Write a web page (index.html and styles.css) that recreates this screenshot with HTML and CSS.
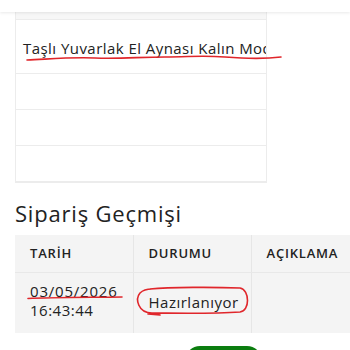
FILE: index.html
```html
<!DOCTYPE html>
<html lang="tr">
<head>
<meta charset="utf-8">
<link rel="stylesheet" href="styles.css">
</head>
<body>
<div class="page">
  <div class="topbar"></div>
  <div class="products">
    <div class="prow prow-head"></div>
    <div class="prow prow-name"><span class="pname">Taşlı Yuvarlak El Aynası Kalın Model</span></div>
    <div class="prow prow-empty"></div>
    <div class="prow prow-empty"></div>
    <div class="prow prow-empty"></div>
  </div>
  <h2 class="title">Sipariş Geçmişi</h2>
  <div class="history-wrap">
    <table class="history">
      <thead>
        <tr><th>TARİH</th><th>DURUMU</th><th>AÇIKLAMA</th></tr>
      </thead>
      <tbody>
        <tr>
          <td class="date"><span class="d">03/05/2026</span><span class="t">16:43:44</span></td>
          <td class="status">Hazırlanıyor</td>
          <td></td>
        </tr>
      </tbody>
    </table>
  </div>
  <div class="actions"><button class="btn-green" type="button" aria-label="Onayla"></button></div>
  <svg class="marks" width="350" height="350" viewBox="0 0 350 350">
    <path d="M27 60 C 50 59, 70 57, 95 58 S 140 57, 165 57 S 200 55, 225 57 S 265 59, 281 57" />
    <path d="M28 298.5 C 50 297.5, 80 297.5, 122 297" />
    <path d="M150 289 C 170 287, 215 287, 240 288 C 250 290, 250 311, 240 312 C 210 314, 170 313, 152 313 C 138 313, 135 299, 140 293 C 143 290, 147 289, 152 289 M152 313 L160 315 L148 314" />
  </svg>
</div>
</body>
</html>
```
FILE: styles.css
```css
html, body {
  margin: 0;
  padding: 0;
  background: #ffffff;
  overflow: hidden;
}
.page {
  position: relative;
  width: 350px;
  height: 350px;
  overflow: hidden;
  font-family: "Open Sans", "Noto Sans", sans-serif;
  color: #222;
}
.topbar {
  height: 12px;
  background: #fff;
  box-shadow: 0 1px 3px rgba(0,0,0,0.09);
  position: relative;
  z-index: 1;
}
.products {
  margin-left: 15px;
  width: 252px;
  border: 1px solid #ececec;
  border-top: 0;
  box-sizing: border-box;
  overflow: hidden;
}
.prow {
  border-bottom: 1px solid #ececec;
  box-sizing: border-box;
}
.prow-head {
  height: 8px;
  background: #f7f7f7;
}
.prow-name {
  height: 54px;
  display: flex;
  align-items: center;
  padding-left: 7px;
  white-space: nowrap;
  padding-top: 3px;
}
.pname {
  font-size: 15px;
  letter-spacing: 0.45px;
  color: #222;
}
.prow-empty {
  height: 36px;
}
.title {
  margin: 14px 0 0 15px;
  font-size: 22px;
  font-weight: 400;
  letter-spacing: 0.8px;
  color: #222;
  line-height: 32px;
  height: 32px;
}
.history-wrap {
  margin-left: 15px;
  margin-top: 6px;
  width: 400px;
}
.history {
  border-collapse: collapse;
  background: #f4f4f4;
  width: 354px;
  table-layout: fixed;
}
.history th, .history td {
  border-right: 1px solid #e6e6e6;
  text-align: left;
  padding: 0 0 0 15px;
  width: 118px;
  box-sizing: border-box;
}
.history th {
  height: 37px;
  font-size: 13px;
  font-weight: 600;
  letter-spacing: 0.8px;
  border-bottom: 1px solid #e8e8e8;
  color: #222;
}
.history td {
  height: 61px;
  font-size: 15px;
  line-height: 19px;
  letter-spacing: 0.5px;
  vertical-align: middle;
}
.date .d, .date .t {
  display: block;
}
.date .d {
  letter-spacing: 0.8px;
  margin-top: -4px;
}
.actions {
  margin-top: 13px;
  margin-left: 185px;
}
.btn-green {
  display: block;
  width: 77px;
  height: 30px;
  border: 0;
  border-radius: 15px;
  background: #0b7d0f;
}
.marks {
  position: absolute;
  left: 0;
  top: 0;
  pointer-events: none;
}
.marks path {
  fill: none;
  stroke: #e0262b;
  stroke-width: 1.6;
  stroke-linecap: round;
  stroke-linejoin: round;
}
```
